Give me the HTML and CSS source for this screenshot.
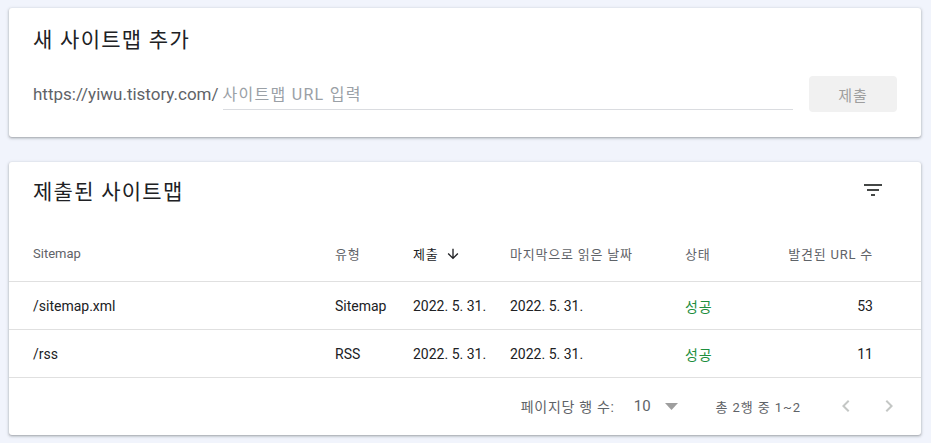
FILE: index.html
```html
<!DOCTYPE html>
<html lang="ko">
<head>
<meta charset="utf-8">
<title>Sitemaps</title>
<link rel="stylesheet" href="styles.css">
</head>
<body>
<section class="card add-card">
  <h2 class="card-title ko">새 사이트맵 추가</h2>
  <div class="add-row">
    <div class="field">
      <span class="prefix">https://yiwu.tistory.com/</span>
      <span class="input ko">사이트맵 URL 입력</span>
    </div>
    <button class="submit ko">제출</button>
  </div>
</section>

<section class="card list-card">
  <div class="list-head">
    <h2 class="card-title ko">제출된 사이트맵</h2>
    <svg class="filter-icon" width="24" height="24" viewBox="0 0 24 24"><path d="M10 18h4v-2h-4v2zM3 6v2h18V6H3zm3 7h12v-2H6v2z" fill="#444746"/></svg>
  </div>
  <div class="row header-row">
    <span>Sitemap</span>
    <span class="ko">유형</span>
    <span class="sorted ko">제출<svg class="sort-icon" width="16" height="16" viewBox="0 0 24 24"><path d="M20 12l-1.41-1.41L13 16.17V4h-2v12.17l-5.58-5.59L4 12l8 8 8-8z" fill="#202124"/></svg></span>
    <span class="ko">마지막으로 읽은 날짜</span>
    <span class="ko">상태</span>
    <span class="num ko">발견된 URL 수</span>
  </div>
  <div class="row data-row">
    <span>/sitemap.xml</span>
    <span>Sitemap</span>
    <span>2022. 5. 31.</span>
    <span>2022. 5. 31.</span>
    <span class="ok ko">성공</span>
    <span class="num">53</span>
  </div>
  <div class="row data-row">
    <span>/rss</span>
    <span>RSS</span>
    <span>2022. 5. 31.</span>
    <span>2022. 5. 31.</span>
    <span class="ok ko">성공</span>
    <span class="num">11</span>
  </div>
  <div class="pager">
    <span class="per-page ko">페이지당 행 수:</span>
    <span class="count">10</span>
    <svg class="drop" width="13" height="7" viewBox="0 0 13 7"><path d="M0 0h13L6.5 7z" fill="#9e9e9e"/></svg>
    <span class="range ko">총 2행 중 1~2</span>
    <svg class="chev" width="24" height="24" viewBox="0 0 24 24"><path d="M15.41 7.41L14 6l-6 6 6 6 1.41-1.41L10.83 12z" fill="#c4c7c5"/></svg>
    <svg class="chev" width="24" height="24" viewBox="0 0 24 24"><path d="M10 6L8.59 7.41 13.17 12l-4.58 4.59L10 18l6-6z" fill="#c4c7c5"/></svg>
  </div>
</section>
</body>
</html>
```

FILE: styles.css
```css
* { box-sizing: border-box; }

body {
  margin: 0;
  padding: 8px 10px 8px 9px;
  background: #f1f4fc;
  font-family: "Roboto", "Noto Sans CJK KR", sans-serif;
  color: #202124;
}

.ko {
  letter-spacing: 0.06em;
}

.card {
  background: #fff;
  border-radius: 3px;
  box-shadow: 0 1px 2px rgba(60, 64, 67, 0.3), 0 1px 3px 1px rgba(60, 64, 67, 0.15);
}

.card-title {
  margin: 0;
  font-size: 21px;
  font-weight: 400;
  line-height: 28px;
  color: #202124;
}

/* add card */
.add-card {
  height: 129px;
  padding: 18px 24px 0 24px;
  margin-bottom: 25px;
}

.add-row {
  display: flex;
  align-items: flex-end;
  margin-top: 22px;
}

.field {
  flex: 1;
  display: flex;
  align-items: baseline;
  margin-bottom: 2px;
  font-size: 16px;
  line-height: 24px;
}

.prefix {
  color: #5f6368;
  font-size: 17px;
  margin-right: 4px;
  padding-bottom: 3px;
}

.input {
  flex: 1;
  color: #9aa0a6;
  border-bottom: 1px solid #dadce0;
  padding-bottom: 2px;
  letter-spacing: 0.08em;
}

.submit {
  width: 88px;
  height: 36px;
  margin-left: 16px;
  border: none;
  border-radius: 4px;
  background: #f1f1f1;
  color: #9e9e9e;
  font-family: inherit;
  font-size: 15px;
}

/* list card */
.list-card {
  height: 273px;
}

.list-head {
  height: 64px;
  display: flex;
  align-items: flex-start;
  justify-content: space-between;
  padding: 16px 36px 0 24px;
}

.row {
  display: grid;
  grid-template-columns: 302px 78px 97px 175px 85px 103px;
  align-items: center;
  padding: 0 48px 0 24px;
  border-bottom: 1px solid #e0e0e0;
}

.header-row {
  height: 56px;
  font-size: 13px;
  color: #5f6368;
}

.sorted {
  color: #202124;
  display: flex;
  align-items: center;
}

.sort-icon {
  margin-left: 7px;
}

.data-row {
  height: 48px;
  font-size: 14px;
  color: #202124;
}

.num {
  text-align: right;
}

.ok {
  color: #1e8e3e;
}

.pager {
  height: 56px;
  display: flex;
  align-items: center;
  justify-content: flex-end;
  padding-right: 20px;
  font-size: 13px;
  color: #5f6368;
}

.per-page {
  font-size: 14px;
  letter-spacing: 0.05em;
}

.count {
  font-size: 15px;
  margin-left: 19px;
}

.drop {
  margin-left: 14px;
}

.range {
  margin-left: 38px;
  color: #5f6368;
  letter-spacing: 0.07em;
}

.chev {
  margin-left: 33px;
}

.chev + .chev {
  margin-left: 19px;
}
```
